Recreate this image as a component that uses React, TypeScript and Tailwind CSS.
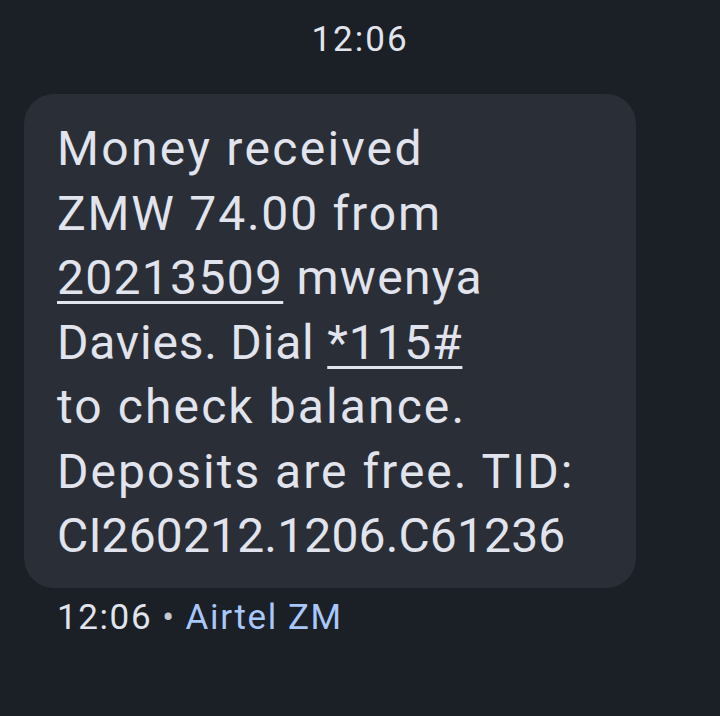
function Link({ children }: { children: React.ReactNode }) {
  return <span className="underline decoration-[3px] underline-offset-[7px]">{children}</span>;
}

export default function App() {
  return (
    <div className="w-[720px] h-[716px] bg-[#1b1f26] font-['Roboto',sans-serif] text-[#e1e4ec] flex flex-col overflow-hidden">
      {/* Timestamp header */}
      <div className="h-[80px] flex items-center justify-center text-[35px] tracking-[2px]">12:06</div>

      {/* Message bubble */}
      <div className="ml-[24px] mt-[14px] w-[612px] rounded-[30px] bg-[#2a2e36] pl-[33px] pr-[16px] pt-[23px] pb-[19px]">
        <div className="text-[48px] leading-[64.5px] whitespace-nowrap">
          <div className="tracking-[2.3px]">Money received</div>
          <div className="tracking-[1.8px]">ZMW 74.00 from</div>
          <div className="tracking-[1.3px]">
            <Link>20213509</Link> mwenya
          </div>
          <div className="tracking-[0.8px]">
            Davies. Dial <Link>*115#</Link>
          </div>
          <div className="tracking-[2.1px]">to check balance.</div>
          <div className="tracking-[2px]">Deposits are free. TID:</div>
          <div className="tracking-[0.15px]">CI260212.1206.C61236</div>
        </div>
      </div>

      {/* Meta line */}
      <div className="pl-[57px] pt-[8px] text-[35px] leading-[44px] tracking-[1.6px]">
        <span>12:06</span>
        <span className="mx-[10px] text-[#c4c8d0]">•</span>
        <span className="text-[#a8c7fa]">Airtel ZM</span>
      </div>
    </div>
  );
}
